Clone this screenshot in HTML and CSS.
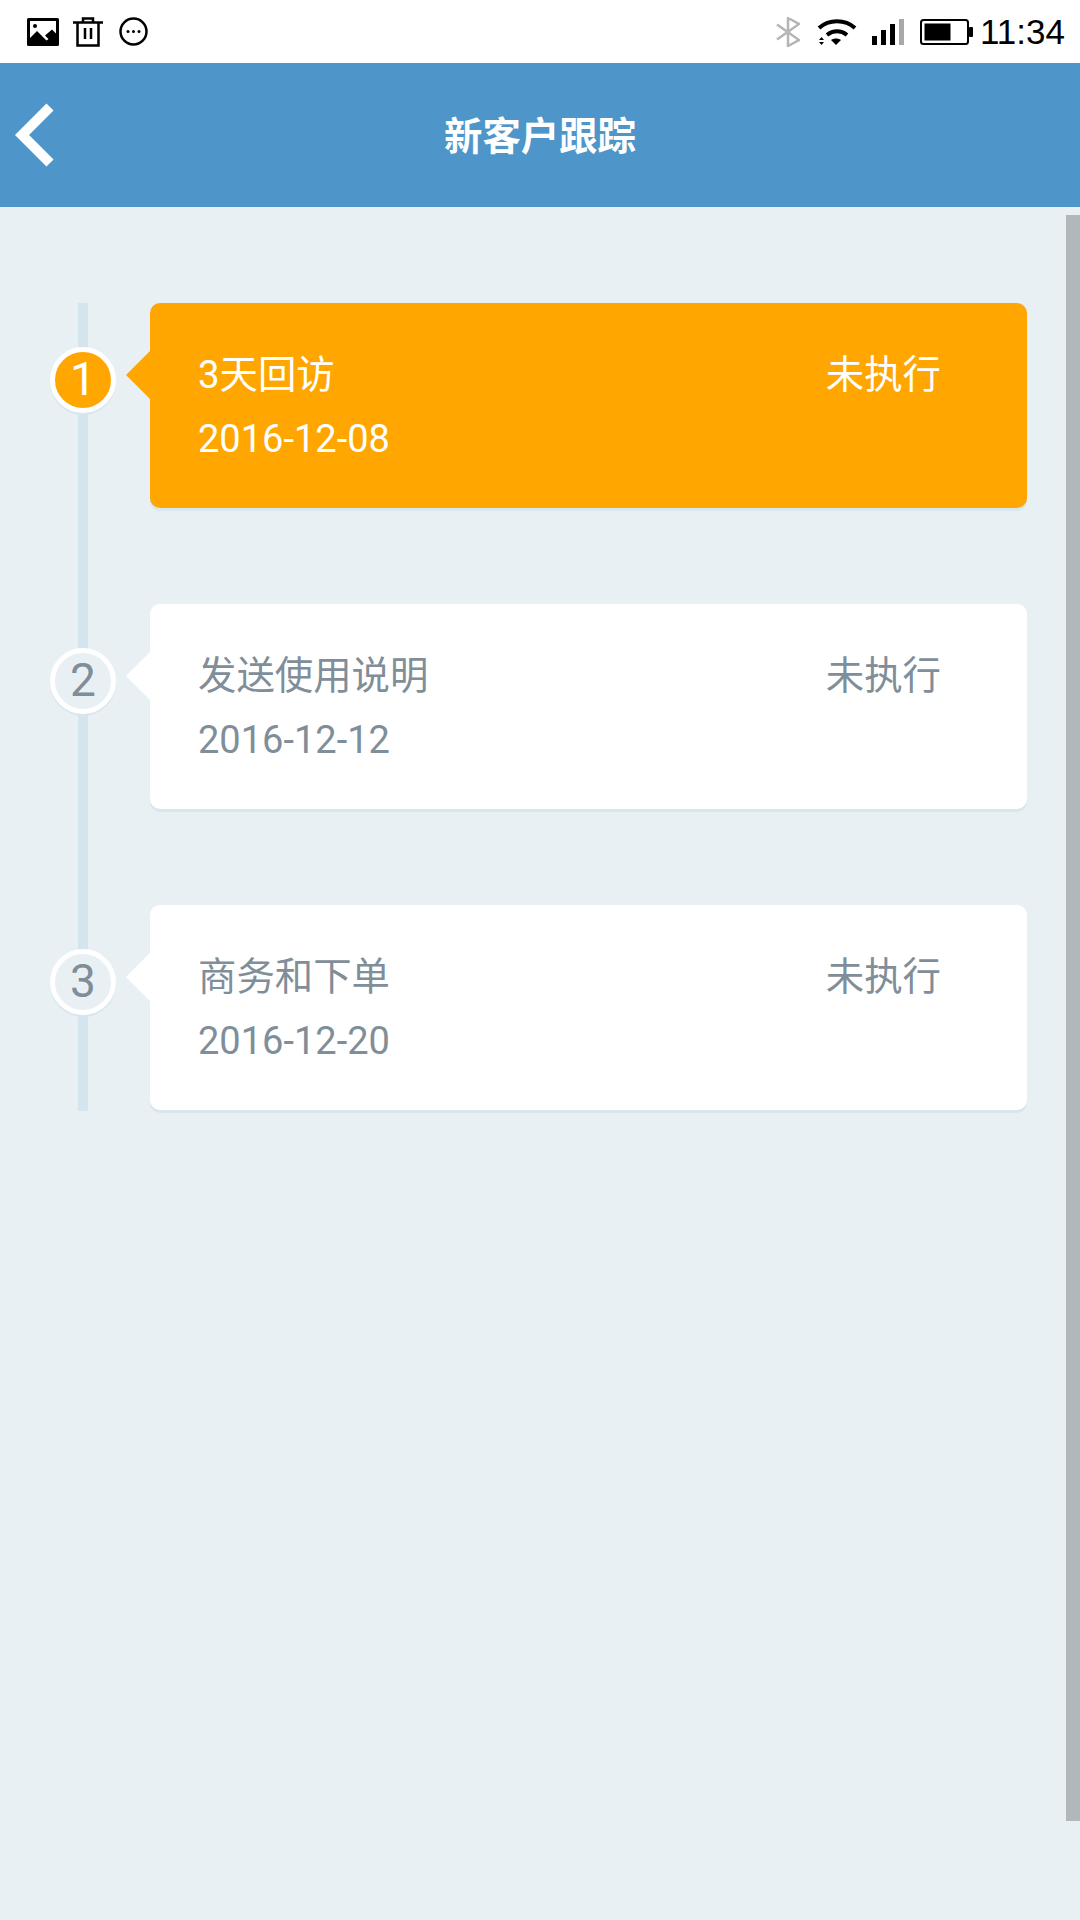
FILE: index.html
```html
<!DOCTYPE html>
<html lang="zh-CN">
<head>
    <meta charset="UTF-8">
    <meta name="viewport" content="width=device-width, initial-scale=1.0">
    <title>新客户跟踪</title>
    <link rel="stylesheet" href="styles.css">
</head>
<body>
<div class="status-bar">
    <div class="status-left">
        <svg class="icon-image" width="32" height="28" viewBox="0 0 32 28">
            <path d="M1.5 0h29A1.5 1.5 0 0 1 32 1.500v25a1.500 1.500 0 0 1-1.500 1.500h-29A1.500 1.500 0 0 1 0 26.500v-25A1.500 1.500 0 0 1 1.500 0z" fill="#000"/>
            <path d="M3 3h26v12.500l-4-4-7 6 3.500 3.500-2 1.500L10 13l-7 7z" fill="#fff"/>
            <circle cx="8" cy="8" r="2" fill="#000"/>
        </svg>
        <svg class="icon-trash" width="30" height="31" viewBox="0 0 30 31" fill="none" stroke="#000" stroke-width="2.500">
            <path d="M0 6.500h30"/>
            <path d="M10 6V2.500h10V6"/>
            <path d="M4.500 7v22.500h21V7"/>
            <path d="M12 12v11M18 12v11"/>
        </svg>
        <svg class="icon-more" width="29" height="29" viewBox="0 0 29 29">
            <circle cx="14.500" cy="14.500" r="13" fill="none" stroke="#000" stroke-width="2.500"/>
            <circle cx="9" cy="14.500" r="1.500"/>
            <circle cx="14.500" cy="14.500" r="1.500"/>
            <circle cx="20" cy="14.500" r="1.500"/>
        </svg>
    </div>
    <div class="status-right">
        <svg class="icon-bluetooth" width="24" height="32" viewBox="0 0 24 32" fill="none" stroke="#b5b5b5" stroke-width="2.500">
            <path d="M12 1v30M1 8.500l22 15.500-11 6M1 23.500L23 8 12 2"/>
        </svg>
        <svg class="icon-wifi" width="40" height="28" viewBox="0 0 40 28" fill="none" stroke="#000">
            <path d="M2 10C12 1 28 1 38 10" stroke-width="4"/>
            <path d="M10 17c6-5 14-5 20 0" stroke-width="4"/>
            <path d="M19 27l-5-5c3-2 7-2 10 0z" fill="#000" stroke="none"/>
            <path d="M2 22l2.500-3 2.500 3zM2 24h5l-2.500 3z" fill="#000" stroke="none"/>
        </svg>
        <svg class="icon-signal" width="32" height="26" viewBox="0 0 32 26">
            <rect x="0" y="17" width="5" height="9"/>
            <rect x="9" y="11" width="5" height="15"/>
            <rect x="18" y="5" width="5" height="21"/>
            <rect x="27" y="0" width="5" height="26" fill="#a8a8a8"/>
        </svg>
        <svg class="icon-battery" width="53" height="26" viewBox="0 0 53 26">
            <rect x="1" y="1" width="47" height="24" rx="2.500" fill="none" stroke="#000" stroke-width="2"/>
            <rect x="4.500" y="4.500" width="26" height="17"/>
            <rect x="49" y="8" width="4" height="10" rx="1"/>
        </svg>
        <span class="status-time">11:34</span>
    </div>
</div>

<div class="header">
    <svg class="back-icon" width="40" height="66" viewBox="0 0 40 66" fill="none" stroke="#fff" stroke-width="10" stroke-linejoin="miter">
        <path d="M35 5L7 33l28 28"/>
    </svg>
    <h1>新客户跟踪</h1>
</div>

<div class="content">
    <div class="timeline">
        <div class="step step-active">
            <div class="step-num">1</div>
            <div class="card">
                <div class="card-text">
                    <div class="card-title">3天回访</div>
                    <div class="card-date">2016-12-08</div>
                </div>
                <div class="card-state">未执行</div>
            </div>
        </div>
        <div class="step">
            <div class="step-num">2</div>
            <div class="card">
                <div class="card-text">
                    <div class="card-title">发送使用说明</div>
                    <div class="card-date">2016-12-12</div>
                </div>
                <div class="card-state">未执行</div>
            </div>
        </div>
        <div class="step">
            <div class="step-num">3</div>
            <div class="card">
                <div class="card-text">
                    <div class="card-title">商务和下单</div>
                    <div class="card-date">2016-12-20</div>
                </div>
                <div class="card-state">未执行</div>
            </div>
        </div>
    </div>
    <div class="scrollbar"></div>
</div>
</body>
</html>
```

FILE: styles.css
```css
html, body {
    height: 100%;
}
body {
    margin: 0;
    display: flex;
    flex-direction: column;
    overflow: hidden;
    font-family: Roboto, "Noto Sans CJK SC", sans-serif;
    background-color: #e8f0f4;
}
.status-bar {
    height: 63px;
    flex: none;
    display: flex;
    align-items: center;
    justify-content: space-between;
    padding: 0 15px 0 27px;
    background-color: #fff;
}
.status-left, .status-right {
    display: flex;
    align-items: center;
}
.icon-trash {
    margin-left: 14px;
}
.icon-more {
    margin-left: 16px;
}
.icon-wifi {
    margin-left: 17px;
}
.icon-signal {
    margin-left: 15px;
}
.icon-battery {
    margin-left: 16px;
}
.status-time {
    margin-left: 7px;
    font-family: "Liberation Sans", Arial, sans-serif;
    font-size: 35px;
    color: #000;
}
.header {
    height: 144px;
    flex: none;
    position: relative;
    display: flex;
    align-items: center;
    justify-content: center;
    background-color: #4e95ca;
}
.header h1 {
    margin: 0 0 5px;
    font-size: 38.4px;
    font-weight: 700;
    color: #fff;
}
.back-icon {
    position: absolute;
    left: 15px;
    top: 39px;
}
.content {
    flex: 1;
    position: relative;
}
.timeline {
    position: relative;
    display: flex;
    flex-direction: column;
    gap: 96px;
    margin-top: 96px;
    padding: 0 53px 0 50px;
}
/* vertical line behind the numbers */
.timeline::before {
    content: "";
    position: absolute;
    left: 78px;
    top: 0;
    bottom: -1px;
    width: 10px;
    background-color: #d5e5ed;
}
.step {
    position: relative;
    display: flex;
    align-items: flex-start;
    gap: 34px;
}
.step-num {
    width: 66px;
    height: 66px;
    flex: none;
    box-sizing: border-box;
    margin-top: 44px;
    padding-bottom: 2px;
    display: flex;
    align-items: center;
    justify-content: center;
    border: 5px solid #fff;
    border-radius: 50%;
    background-color: #e8f0f4;
    box-shadow: 0 2px 0 #d8e6ee;
    font-size: 46px;
    color: #7f8e98;
}
.card {
    flex: 1;
    height: 205px;
    position: relative;
    display: flex;
    justify-content: space-between;
    box-sizing: border-box;
    padding: 39px 86px 0 48px;
    border-radius: 10px;
    background-color: #fff;
    box-shadow: 0 3px 0 #d8e6ee;
    color: #7f8e98;
    font-size: 38px;
    line-height: 65px;
}
.card-title, .card-state {
    font-size: 38.4px;
}
/* arrow pointing at the number */
.card::before {
    content: "";
    position: absolute;
    left: -24px;
    top: 48px;
    border-style: solid;
    border-width: 24px 24px 24px 0;
    border-color: transparent #fff transparent transparent;
}
.step-active .step-num {
    background-color: #ffa600;
    color: #fff;
}
.step-active .card {
    background-color: #ffa600;
    color: #fff;
}
.step-active .card::before {
    border-right-color: #ffa600;
}
.scrollbar {
    position: absolute;
    top: 8px;
    right: 0;
    width: 14px;
    height: 1606px;
    background-color: #b2b8b9;
}
```
